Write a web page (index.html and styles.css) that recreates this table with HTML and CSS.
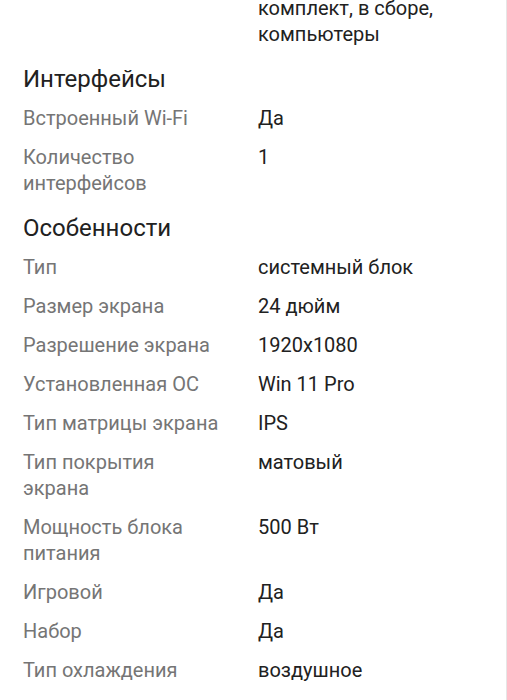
FILE: index.html
```html
<!DOCTYPE html>
<html lang="ru">
<head>
<meta charset="utf-8">
<link rel="stylesheet" href="styles.css">
</head>
<body>
<div class="page">
  <div class="specs">
    <div class="row first">
      <div class="label"></div>
      <div class="value">комплект, в сборе,<br>компьютеры</div>
    </div>
    <h2 class="group-title">Интерфейсы</h2>
    <div class="row"><div class="label">Встроенный Wi-Fi</div><div class="value">Да</div></div>
    <div class="row"><div class="label">Количество интерфейсов</div><div class="value">1</div></div>
    <h2 class="group-title">Особенности</h2>
    <div class="row"><div class="label">Тип</div><div class="value">системный блок</div></div>
    <div class="row"><div class="label">Размер экрана</div><div class="value">24 дюйм</div></div>
    <div class="row"><div class="label">Разрешение экрана</div><div class="value">1920x1080</div></div>
    <div class="row"><div class="label">Установленная ОС</div><div class="value">Win 11 Pro</div></div>
    <div class="row"><div class="label">Тип матрицы экрана</div><div class="value">IPS</div></div>
    <div class="row"><div class="label">Тип покрытия экрана</div><div class="value">матовый</div></div>
    <div class="row"><div class="label">Мощность блока питания</div><div class="value">500 Вт</div></div>
    <div class="row"><div class="label">Игровой</div><div class="value">Да</div></div>
    <div class="row"><div class="label">Набор</div><div class="value">Да</div></div>
    <div class="row"><div class="label">Тип охлаждения</div><div class="value">воздушное</div></div>
  </div>
</div>
</body>
</html>
```
FILE: styles.css
```css
html, body {
  margin: 0;
  padding: 0;
  background: #ffffff;
  overflow: hidden;
}
body {
  font-family: Roboto, "Noto Sans", sans-serif;
  color: #212121;
}
.page {
  width: 506px;
  height: 700px;
  border-right: 1px solid #e6e6e6;
  overflow: hidden;
}
.specs {
  padding: 0 23px;
  margin-top: -11.5px;
}
.row {
  display: grid;
  grid-template-columns: 235px 1fr;
  padding: 6.5px 0;
  font-size: 20px;
  line-height: 26px;
}
.label {
  color: #757575;
  padding-right: 36px;
}
.value {
  color: #212121;
}
.group-title {
  margin: 11.4px 0 5.4px;
  font-size: 24px;
  line-height: 28px;
  font-weight: 400;
  color: #212121;
}
```
